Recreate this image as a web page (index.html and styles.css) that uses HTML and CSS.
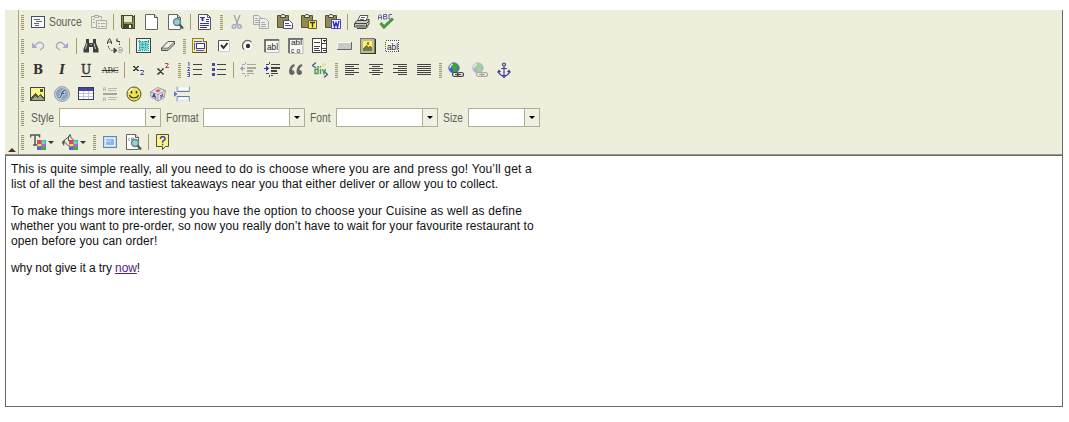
FILE: index.html
```html
<!DOCTYPE html>
<html lang="en">
<head>
<meta charset="utf-8">
<title>Rich text editor</title>
<link rel="stylesheet" href="styles.css">
</head>
<body>
<svg class="defs" width="0" height="0">
  <defs>
    <g id="page"><path d="M1.500.5h9l3 3v12h-12z" fill="#fff" stroke="#666"/><path d="M10.500.5v3h3" fill="#ddd" stroke="#555"/></g>
    <g id="clip"><path d="M.5 1.500h11v12H.5z" fill="#8f8b52" stroke="#55533a"/><path d="M3.500 3.500V2L5 .5h2L8.500 2v1.500z" fill="#e4e4da" stroke="#444"/></g>
    <g id="globe"><circle cx="6" cy="6" r="5.300" fill="#3558e8" stroke="#8393a8"/><path d="M4 2l4-.5 2.500 2.500-1.500 2 1 1-2 3-2.500 0-1-3-1-1z" fill="#3ca335"/><path d="M2 6l.5-2 2-2" fill="none" stroke="#e8f4ff" stroke-width="1.400"/></g>
    <g id="chain" fill="none" stroke-width="1.200"><rect x="4.500" y="10.500" width="6" height="4" rx="2" fill="#eeeedd"/><rect x="9.500" y="10.500" width="6" height="4" rx="2" fill="#eeeedd"/><path d="M7 12.500h6"/></g>
    <g id="swatch"><path d="M7 6h9v10H7z" fill="#777"/><path d="M7.500 6.500h4V10h-4z" fill="#ff3b3b"/><path d="M11.500 6.500h4V10h-4z" fill="#45e0e0"/><path d="M7.500 10h4v2.500h-4z" fill="#eee040"/><path d="M11.500 10h4v2.500h-4z" fill="#ee48ee"/><path d="M7.500 12.500h4v3h-4z" fill="#4562f5"/><path d="M11.500 12.500h4v3h-4z" fill="#38b838"/></g>
    <g id="lens"><circle cx="9" cy="8" r="3.500" fill="#8fd3d3" stroke="#668488" stroke-width="1.400"/><path d="M11.500 10.500L15 14.500" stroke="#555" stroke-width="2.200"/></g>
  </defs>
</svg>
<main class="editor">
  <header class="chrome">
    <div class="collapser"><svg viewBox="0 0 8 4" class="collapse-icon"><path d="M0 4L4 0l4 4z" fill="#4a3028"/></svg></div>
    <div class="toolbars">
      <div class="row">
        <div class="group"><i class="grip"></i>
          <a class="btn source"><svg viewBox="0 0 16 16" class="crisp"><path d="M1.500 2.500h13v11h-13z" fill="#f7f9f5" stroke="#405070"/><path d="M4 5.500h6M6 7.500h6M4 9.500h5M5 11.500h4" stroke="#667"/></svg><span class="caption source-text">Source</span></a>
          <a class="btn"><svg viewBox="0 0 16 16" fill="#eeede4" stroke="#aaaaa0"><path d="M.5 13.500v-11h3v-1h4v1h3v3M.5 13.500h5"/><path d="M3.500 1.500h4v2h-4zM5.500 6.500h10v8h-10z"/><path d="M7 9.500h2M10 9.500h4M7 12.500h2M10 12.500h4M2 5.500h2M2 8.500h2"/></svg></a>
          <i class="sep"></i>
          <a class="btn"><svg viewBox="0 0 16 16" class="crisp"><path d="M1 1h14v14H2l-1-1z" fill="#454532"/><path d="M4 2h8v6H4z" fill="#e9ebcc"/><path d="M2 2h1v12H2zM13 3h1v11h-1z" fill="#929249"/><path d="M4 8h9v2H4z" fill="#929249"/><path d="M9 11h2v3H9z" fill="#fff"/><path d="M13 1h1v1h-1z" fill="#fff"/></svg></a>
          <a class="btn"><svg viewBox="0 0 16 16"><use href="#page"/></svg></a>
          <a class="btn"><svg viewBox="0 0 16 16"><use href="#page" x="-1"/><use href="#lens"/></svg></a>
          <i class="sep"></i>
          <a class="btn"><svg viewBox="0 0 16 16"><path d="M1.500.5h9l3 3v12h-12z" fill="#fff" stroke="#556"/><path d="M10.500.5v3h3" fill="none" stroke="#556"/><path d="M3 3h5v1H6.500v3h-2V4H3zM9 5h3v1H9zM9 7h3v1H9zM3 9h9v1H3zM3 11h9v1H3zM3 13h7v1H3z" fill="#2a2af0"/></svg></a>
        </div>
        <div class="group"><i class="grip"></i>
          <a class="btn"><svg viewBox="0 0 16 16" fill="none" stroke="#a5a5aa" stroke-width="1.400"><path d="M5 1l4 10M11 1L7 11"/><g stroke="#a6a6c8"><circle cx="5" cy="12.500" r="1.800"/><circle cx="10.500" cy="12.500" r="1.800"/></g></svg></a>
          <a class="btn"><svg viewBox="0 0 16 16" fill="#eeede8" stroke="#a9a9b0"><path d="M.5 1.500h5l3 3v6h-8z"/><path d="M2 4.500h3M2 6.500h4M2 8.500h4"/><path d="M6.500 4.500h6l3 3v7h-9z"/><path d="M8 8.500h4M8 10.500h5M8 12.500h5"/></svg></a>
          <a class="btn"><svg viewBox="0 0 16 16"><use href="#clip"/><path d="M6.500 6.500h6l3 3v5h-9z" fill="#fff" stroke="#4747a0"/><path d="M8 9.500h4M8 11.500h6" stroke="#4747c0"/></svg></a>
          <a class="btn"><svg viewBox="0 0 16 16"><use href="#clip"/><path d="M7.500 6.500h8v8h-8z" fill="#ffef40" stroke="#666030"/><path d="M9 8.500h5M11.500 8.500v5" stroke="#333" stroke-width="1.400"/></svg></a>
          <a class="btn"><svg viewBox="0 0 16 16"><use href="#clip"/><path d="M6.500 5.500h9v9h-9z" fill="#f4f4ff" stroke="#4747a8"/><path d="M8 7l1.500 6L11 8.500l1.500 4.500L14 7" fill="none" stroke="#22c" stroke-width="1.300"/></svg></a>
          <i class="sep"></i>
          <a class="btn"><svg viewBox="0 0 16 16"><path d="M4 6l2-4.500h8L12 7" fill="#fff" stroke="#555"/><path d="M7 3.500h4M6 5.500h4" stroke="#666"/><path d="M.5 9.500L3 6.500h9.500l2.500-1.500v5L12.500 13H.5z" fill="#c9c9be" stroke="#444"/><path d="M1 9.500h11.500L15 7M12.500 9.500V13M3 14.500h9l2-2" fill="none" stroke="#444"/><path d="M2 11.500h9" stroke="#777"/></svg></a>
          <a class="btn"><svg viewBox="0 0 16 16"><g fill="none" stroke="#6265a8"><path d="M.5 5.500V2L2 .5 3.500 2v3.500M1 3.500h2.500M5.500.5v4.500h3l.5-1-.5-1.500H6M5.500.5h3v2M14 .5h-3v4.500h3"/></g><path d="M2.500 9l3.500 4L15 4.500" fill="none" stroke="#459845" stroke-width="3"/></svg></a>
        </div>
      </div>
      <div class="row">
        <div class="group"><i class="grip"></i>
          <a class="btn"><svg viewBox="0 0 16 16"><path d="M4 8l4.500-3.500H11l2.500 2v3L10 12" fill="none" stroke="#a8a8c8" stroke-width="1.300"/><path d="M2 4.500V10h5.500z" fill="#a8a8cc"/></svg></a>
          <a class="btn"><svg viewBox="0 0 16 16"><path d="M12 8L7.500 4.500H5L2.500 6.500v3L6 12" fill="none" stroke="#a8a8c8" stroke-width="1.300"/><path d="M14 4.500V10H8.500z" fill="#a8a8cc"/></svg></a>
          <i class="sep"></i>
          <a class="btn"><svg viewBox="0 0 16 16"><path d="M3 1h3v4h4V1h3v4l2.500 6v3.500H10V9H6v5.500H.5V11L3 5z" fill="#3d4040"/><path d="M4 5.500L2.500 11M11 5.500L12.500 11" stroke="#c8cac5"/><path d="M7.500 6.500h1" stroke="#fff"/></svg></a>
          <a class="btn"><svg viewBox="0 0 16 16" fill="none" stroke="#444"><path d="M.5 6V4L2.500.5 4.500 4v2M1 4h3.500"/><path d="M1.500 8v2l3 2.500h4M12.500 7V4L9 2" stroke-dasharray="1.500 1.200"/><path d="M7 10l3 2.500L7 15z" fill="#444"/><path d="M10 .5v3h3"/><path d="M12 9v6M12 9.500h2.500l1 1-.5 1.500h-3 3l.5 1-1 1.500H12" stroke="#aaa"/></svg></a>
          <i class="sep"></i>
          <a class="btn"><svg viewBox="0 0 16 16" class="crisp"><path d="M.5.5h14v14H.5z" fill="#e9f3ee" stroke="#3d4545"/><path d="M3 3h9v9H3z" fill="#70d8d8"/><path d="M3.500 2v11M6.500 3v9M9.500 3v9M12.500 2v11M2 3.500h11M3 6.500h9M3 9.500h9M2 12.500h11" stroke="#3a9999" stroke-dasharray="1 1"/></svg></a>
          <a class="btn"><svg viewBox="0 0 16 16"><path d="M1.500 10L8 3.500h6.500v2.500L8 12.500H1.500z" fill="#b9b9b5" stroke="#555"/><path d="M2 10h6l6-6.500" fill="none" stroke="#666"/><path d="M3 9.500h5L13.500 4H8.500z" fill="#f0f0ed"/></svg></a>
        </div>
        <div class="group"><i class="grip"></i>
          <a class="btn"><svg viewBox="0 0 16 16" class="crisp"><path d="M.5.500h11l3 3v11H.5z" fill="#fbef80" stroke="#8a8340"/><path d="M11.500.5v3h3" fill="#fff" stroke="#777039"/><path d="M14.500 4v10.500H1" fill="none" stroke="#55502a"/><path d="M4.500 5.500h8v5h-8z" fill="#fff" stroke="#3333ee"/><path d="M2 3.500h8M2.500 5v7M4 12.500h8" stroke="#5555e8"/></svg></a>
          <a class="btn"><svg viewBox="0 0 16 16"><path d="M2.500 2.500h11v11h-11z" fill="#fff" stroke="#ccc"/><path d="M2.500 13V2.500H13" fill="none" stroke="#555"/><path d="M5 7l2.500 3L11.500 5" fill="none" stroke="#333" stroke-width="2"/></svg></a>
          <a class="btn"><svg viewBox="0 0 16 16"><circle cx="8" cy="8" r="5" fill="#fff" stroke="#ddd"/><path d="M4 11.500A5 5 0 0 1 11.500 4" fill="none" stroke="#666" stroke-width="1.200"/><circle cx="8" cy="8" r="2.200" fill="#333"/></svg></a>
          <a class="btn"><svg viewBox="0 0 16 16"><path d="M1 1.500h14v13H1z" fill="#f8f8f2" stroke="#bbb"/><path d="M1 14V2h14" fill="none" stroke="#555" stroke-width="1.500"/><text x="3" y="12" textLength="11" lengthAdjust="spacingAndGlyphs" class="glyph">abl</text></svg></a>
          <a class="btn"><svg viewBox="0 0 16 16"><path d="M1 .5h14v15H1z" fill="#f8f8f2" stroke="#bbb"/><path d="M1 15V1h14" fill="none" stroke="#555" stroke-width="1.500"/><text x="3" y="7.300" textLength="11" lengthAdjust="spacingAndGlyphs" class="glyph tiny">abl</text><text x="3" y="14.800" textLength="9" lengthAdjust="spacing" class="glyph tiny">co</text></svg></a>
          <a class="btn"><svg viewBox="0 0 16 16" class="crisp"><path d="M.5.500h14v14H.5z" fill="#fff" stroke="#444"/><path d="M9.500 1v14M10 5.500h5M10 10.500h5M2 4.500h6M2 8.500h6M2 10.500h5M2 12.500h6" stroke="#444"/><path d="M11 2.500h3M12 3.500h1M11 12.500h3" stroke="#333"/></svg></a>
          <a class="btn"><svg viewBox="0 0 16 16"><path d="M1 4h14v7H1z" fill="#c9c9c6"/><path d="M1.500 11V4.500H15" fill="none" stroke="#fafaf6"/><path d="M1 11.500h14.500V4" fill="none" stroke="#666"/></svg></a>
          <a class="btn"><svg viewBox="0 0 16 16" class="crisp"><path d="M.5.500h14v15H.5z" fill="#bdb99b" stroke="#77756a"/><path d="M15.500 1v14.500H1" fill="none" stroke="#33332a"/><path d="M3 3h9v10H3z" fill="#ffef5a"/><path d="M3 10l3-3 2 2 2-1 2 2v3H3z" fill="#77754a"/><path d="M7 4h2v3H7z" fill="#88834c"/></svg></a>
          <a class="btn"><svg viewBox="0 0 16 16" class="crisp"><path d="M1.500 2.500h13v11h-13z" fill="#f8f8f4" stroke="#555" stroke-dasharray="1 1"/><text x="3" y="12" textLength="11" lengthAdjust="spacingAndGlyphs" class="glyph">abl</text></svg></a>
        </div>
      </div>
      <div class="row">
        <div class="group"><i class="grip"></i>
          <a class="btn letter bold">B</a><a class="btn letter italic">I</a><a class="btn letter underline">U</a><a class="btn letter strike">ABC</a>
          <i class="sep"></i>
          <a class="btn"><svg viewBox="0 0 16 16"><path d="M3 4.500l4 4M7 4.500l-4 4M2 4.500h2M6 4.500h2M2 8.500h2M6 8.500h2" stroke="#333" stroke-width="1.100"/><path d="M9 8.500h3.500V10L9.500 12.500H13" fill="none" stroke="#5557b0"/></svg></a>
          <a class="btn"><svg viewBox="0 0 16 16"><path d="M3 7l5 5M8 7L3 12M2 7h2.500M7 7h2M2 12h2.500M7 12h2" stroke="#333" stroke-width="1.100"/><path d="M10 1.500h3V3l-2.500 2.500H14" fill="none" stroke="#ad4949"/></svg></a>
        </div>
        <div class="group"><i class="grip"></i>
          <a class="btn"><svg viewBox="0 0 16 16"><path d="M6 2.500h9M6 7.500h9M6 12.500h9" stroke="#444" class="crisp"/><path d="M1 .500h1V4M.5 5.500h2v1l-2 2h2.500M.5 10.500h2v4h-2m0-2h2" fill="none" stroke="#5050a5"/></svg></a>
          <a class="btn"><svg viewBox="0 0 16 16" class="crisp"><path d="M6 2.500h9M6 7.500h9M6 12.500h9" stroke="#444"/><path d="M1 1h3v3H1zM1 6h3v3H1zM1 11h3v3H1z" fill="#4848a0"/></svg></a>
          <i class="sep"></i>
          <a class="btn"><svg viewBox="0 0 16 16" class="crisp" stroke="#aaa99c"><path d="M2 2.500h3M7 2.500h9M7 5h9M7 8h6M2 11.500h3M7 11.500h7M5.500 0v2M5.500 13v2M7 13.500h2"/><path d="M7 5.500h9M7 8.500h6" stroke-width="2"/><path d="M0 6.500h5M2.500 4v5M1.500 5v3" stroke="#9b9bcc"/></svg></a>
          <a class="btn"><svg viewBox="0 0 16 16" class="crisp" stroke="#444"><path d="M2 2.500h3M7 2.500h9M2 11.500h3M7 11.500h7M5.500 0v2M5.500 13v2M7 13.500h2"/><path d="M7 5.500h9M7 8.500h6" stroke-width="2"/><path d="M0 6.500h5M2.500 4v5M3.500 5v3" stroke="#3535a8"/></svg></a>
          <a class="btn"><svg viewBox="0 0 16 16" fill="#666"><path d="M6 2C3 3 1 6 1 9.500 1 12 2.500 13 4 13s2.500-1 2.500-2.500S5.500 8 4 8c0-2 1-3 3-4zM13.500 2c-3 1-5 4-5 7.500C8.500 12 10 13 11.500 13S14 12 14 10.500 13 8 11.500 8c0-2 1-3 3-4z"/></svg></a>
          <a class="btn"><svg viewBox="0 0 16 16"><path d="M4 .5L.5 3.500 4 6M12 9l3.500 3.500L12 15.500" fill="none" stroke="#4d6280" stroke-width="1.300"/><path d="M6 4v7.500H3V7.500h3M8.500 7v5M8.500 4v1.500M10.500 7l1.500 4.500L13.500 7" fill="none" stroke="#4a9a5a" stroke-width="1.400"/><path d="M12 0l1 1.500 2 1-2 1-1 1.500-1-1.500-2-1 2-1z" fill="#f1de84"/></svg></a>
        </div>
        <div class="group"><i class="grip"></i>
          <a class="btn"><svg viewBox="0 0 16 16" class="crisp lines"><path d="M1 2.500h14M1 4.500h9M1 6.500h14M1 8.500h9M1 10.500h14M1 12.500h9"/></svg></a>
          <a class="btn"><svg viewBox="0 0 16 16" class="crisp lines"><path d="M1 2.500h14M4 4.500h8M1 6.500h14M4 8.500h8M1 10.500h14M4 12.500h8"/></svg></a>
          <a class="btn"><svg viewBox="0 0 16 16" class="crisp lines"><path d="M1 2.500h14M6 4.500h9M1 6.500h14M6 8.500h9M1 10.500h14M6 12.500h9"/></svg></a>
          <a class="btn"><svg viewBox="0 0 16 16" class="crisp lines"><path d="M1 2.500h14M1 4.500h14M1 6.500h14M1 8.500h14M1 10.500h14M1 12.500h14"/></svg></a>
        </div>
        <div class="group"><i class="grip"></i>
          <a class="btn"><svg viewBox="0 0 16 16"><use href="#globe"/><use href="#chain" stroke="#444"/></svg></a>
          <a class="btn"><svg viewBox="0 0 16 16" class="faded"><use href="#globe"/><use href="#chain" stroke="#444"/></svg></a>
          <a class="btn"><svg viewBox="0 0 16 16" fill="none" stroke="#40408f" stroke-width="1.200"><circle cx="8" cy="2.500" r="1.500"/><path d="M8 4v10M5 6.500h6M3 9.500v2L5.500 13.500h5L13 11.500v-2M1.500 10.500l1.500-2 1.500 1.500M14.500 10.500l-1.500-2-1.500 1.500M6.500 14L8 15.500 9.500 14"/></svg></a>
        </div>
      </div>
      <div class="row">
        <div class="group"><i class="grip"></i>
          <a class="btn"><svg viewBox="0 0 16 16" class="crisp"><path d="M.5 1.500h14v13H.5z" fill="#fbf58a" stroke="#444"/><path d="M1 12l4-5 3 3 2-2 4 4v2H1z" fill="#54523a"/><path d="M10 3h3v3h-3z" fill="#55523a"/><path d="M2 14l3-4 2 2 3-2 4 4z" fill="#a9a683"/></svg></a>
          <a class="btn"><svg viewBox="0 0 16 16"><circle cx="8" cy="8" r="6.800" fill="#8aa5c2" stroke="#c5ccd2" stroke-width="1.500"/><circle cx="8" cy="8" r="7.500" fill="none" stroke="#8993a0" stroke-width=".8"/><path d="M11.500 4C8 4.500 8 7 7 10c-.5 1.500-1 2-2.500 2M7 7.500h4" fill="none" stroke="#f2f6fa" stroke-width="2.600"/><path d="M11.500 4C8 4.500 8 7 7 10c-.5 1.500-1 2-2.500 2M7 7.500h3.500" fill="none" stroke="#445f7c" stroke-width="1.300"/></svg></a>
          <a class="btn"><svg viewBox="0 0 16 16" class="crisp"><path d="M.5 1.500h15v12H.5z" fill="#fff" stroke="#333d62"/><path d="M1 2h14v3H1z" fill="#4448a5"/><path d="M1 7.500h14M1 10.500h14M5.500 5v8M10.500 5v8" stroke="#c5c5d8"/></svg></a>
          <a class="btn"><svg viewBox="0 0 16 16" stroke="#bbbaae" fill="none"><path d="M1.500 5V2l1-1 1 1v3M1.500 3.500h2M6 2.500h9M6 4.500h8M1.500 15v-3l1-1 1 1v3M1.500 13.500h2M6 11.500h9M6 13.500h8"/><path d="M1 8h14" stroke="#a5a498" stroke-width="2"/></svg></a>
          <a class="btn"><svg viewBox="0 0 16 16"><circle cx="8" cy="8" r="7" fill="#ece455" stroke="#55522b"/><path d="M3 6a5 5 0 0 1 4-3.500" fill="none" stroke="#fcfac0" stroke-width="1.500"/><path d="M5.500 5v2.500M10.500 5v2.500" stroke="#333" stroke-width="1.500"/><path d="M3.500 9c1 3.700 8 3.700 9 0" fill="none" stroke="#443f20" stroke-width="1.100"/></svg></a>
          <a class="btn"><svg viewBox="0 0 16 16"><path d="M.5 6l7-4.500 8 3L14 12l-6 3-7-4z" fill="#e8e8ef" stroke="#999"/><path d="M8 8.500V15M.5 6L8 8.500l7.500-4" fill="none" stroke="#999"/><path d="M5 5l3-2 3 1.500L8 6.500z" fill="#dd5959"/><path d="M2.500 11l1.500-3 2 4.500M3 10.500h2" fill="none" stroke="#4545bc" stroke-width="1.300"/><path d="M10 9.500l3.500 1M13 7.500l-2.500 5" stroke="#7c4cac" stroke-width="1.300"/></svg></a>
          <a class="btn"><svg viewBox="0 0 16 16"><path d="M3 .5v5h12.500v-5M3 15.500v-5h12.500v5" fill="#dce9f4" stroke="#8ba5bd"/><path d="M5 2.500h9M5 12.500h9" stroke="#fff" stroke-width="2"/><path d="M3 5.500h12.500M3 10.500h12.500" stroke="#5f7d99"/><path d="M0 5l3.500 3L0 11z" fill="#5b7fc0"/></svg></a>
        </div>
      </div>
      <div class="row">
        <div class="group"><i class="grip"></i>
          <label class="field"><span class="caption style-text">Style</span><span class="combo"><i class="drop"></i></span></label>
          <label class="field"><span class="caption format-text">Format</span><span class="combo"><i class="drop"></i></span></label>
          <label class="field"><span class="caption font-text">Font</span><span class="combo"><i class="drop"></i></span></label>
          <label class="field"><span class="caption size-text">Size</span><span class="combo small"><i class="drop"></i></span></label>
        </div>
      </div>
      <div class="row">
        <div class="group"><i class="grip"></i>
          <a class="btn menu"><svg viewBox="0 0 16 16"><path d="M.5 3.500V1h9v2.500M5 1v10M3 11h4" fill="none" stroke="#555" stroke-width="1.500"/><use href="#swatch"/></svg><i class="caret"></i></a>
          <a class="btn menu"><svg viewBox="0 0 16 16"><path d="M1.500 7l6-5 5 5-6 5z" fill="#e9e9e2" stroke="#555"/><path d="M6.500 7V2.500l1.500-2 1 2" fill="none" stroke="#555"/><path d="M0 9c0-2 2-3 3-3l-1 6z" fill="#555"/><use href="#swatch"/></svg><i class="caret"></i></a>
        </div>
        <div class="group"><i class="grip"></i>
          <a class="btn"><svg viewBox="0 0 16 16" class="crisp"><path d="M1.500 2.500h13v11h-13z" fill="#c5d8f0" stroke="#6688b5"/><path d="M3.500 4.500h9v7h-9z" fill="#8fb5ea" stroke="#e5efff"/><path d="M4 6h5v2H4z" fill="#b0cdf3"/></svg></a>
          <a class="btn"><svg viewBox="0 0 16 16"><use href="#page" x="-1"/><path d="M4 4L2 5.500 4 7M5.500 7V4h2v1.500h-2" fill="none" stroke="#888" stroke-width=".8"/><use href="#lens" y="1"/></svg></a>
          <i class="sep"></i>
          <a class="btn"><svg viewBox="0 0 16 16"><path d="M1.500.5h12v12h-3l-3 3v-3h-6z" fill="#fbf589" stroke="#55523c"/><path d="M5.500 5V4l1-1.300h2.500l1 1.300v1.500L7.700 7.200v1.500M7.700 9.800v1.500" fill="none" stroke="#4848a0" stroke-width="1.500"/></svg></a>
        </div>
      </div>
    </div>
  </header>
  <article class="content">
    <p><span class="l1">This is quite simple really, all you need to do is choose where you are and press go! You’ll get a</span><br><span class="l2">list of all the best and tastiest takeaways near you that either deliver or allow you to collect.</span></p>
    <p><span class="l3">To make things more interesting you have the option to choose your Cuisine as well as define</span><br><span class="l4">whether you want to pre-order, so now you really don’t have to wait for your favourite restaurant to</span><br><span class="l5">open before you can order!</span></p>
    <p><span class="l6">why not give it a try <a class="link" href="#">now</a>!</span></p>
  </article>
</main>
</body>
</html>
```
FILE: styles.css
```css
* { box-sizing: border-box; }
body {
  margin: 0;
  padding: 10px 6px 15px 5px;
  background: #fff;
  font-family: "Liberation Sans", Arial, sans-serif;
  font-size: 12px;
}
.defs { display: block; position: absolute; }
.editor { width: 1058px; height: 397px; display: flex; flex-direction: column; }
.chrome {
  display: flex;
  height: 145px;
  background: #eeeedd;
  border-right: 1px solid #696969;
  border-bottom: 1px solid #96968a;
}
.collapser {
  width: 14px;
  display: flex;
  align-items: flex-end;
  justify-content: center;
  padding-bottom: 2px;
  border-right: 1px solid #a4a491;
}
.collapse-icon { width: 8px; height: 4px; display: block; }
.toolbars { display: flex; flex-direction: column; }
.row { display: flex; gap: 1px; height: 24px; }
.group { display: flex; align-items: center; }
.grip {
  width: 3px;
  height: 15px;
  margin: 0 2px;
  background: repeating-linear-gradient(#a39d75 0 1px, #e4e1c8 1px 2px);
}
.sep { width: 1px; height: 16px; margin: 0 2px; background: #a19f72; }
.btn { display: flex; align-items: center; justify-content: center; width: 24px; height: 24px; color: #333; text-decoration: none; }
.btn svg { width: 16px; height: 16px; display: block; flex: none; }
.source { width: 61px; justify-content: flex-start; padding-left: 4px; gap: 3px; }
.menu { width: 32px; justify-content: flex-start; padding-left: 4px; gap: 2px; }
.caret { border: solid transparent; border-width: 3px 3px 0; border-top-color: #333; }
.crisp { shape-rendering: crispEdges; }
.lines { stroke: #444; }
.faded { opacity: .4; }
.glyph { font: 8.5px "Liberation Sans", sans-serif; fill: #222; }
.tiny { font-size: 6.5px; }
.letter { font: bold 12px "DejaVu Serif", serif; }
.italic { font-style: italic; }
.underline { font-weight: normal; text-decoration: underline; text-underline-offset: 2px; -webkit-text-stroke: .4px #333; }
.strike { font: 8.5px "Liberation Serif", serif; text-decoration: line-through; letter-spacing: -.3px; }
.caption { color: #5e5e57; transform: scaleX(.86); transform-origin: left; white-space: nowrap; line-height: 16px; }
.field { display: flex; align-items: center; padding-left: 5px; }
.style-text { width: 28px; }
.format-text { width: 37px; }
.font-text { width: 26px; }
.size-text { width: 25px; }
.combo { display: flex; justify-content: flex-end; width: 102px; height: 19px; margin-top: -1px; background: #fff; border: 1px solid #b0af96; }
.small { width: 72px; }
.drop { display: flex; align-items: center; justify-content: center; width: 15px; background: #f1f1e3; border-left: 1px solid #b0af96; }
.drop::after { content: ""; border: solid transparent; border-width: 3px 3px 0; border-top-color: #000; }
.content {
  flex: 1;
  padding: 6px 5px;
  border: 1px solid #696969;
  color: #111;
  line-height: 15px;
  white-space: nowrap;
}
.content p { margin: 0 0 12px; }
.link { color: #551a8b; }
.l1 { letter-spacing: .157px; }
.l2 { letter-spacing: .065px; }
.l3 { letter-spacing: .167px; }
.l4 { letter-spacing: .03px; }
.l5 { letter-spacing: .085px; }
.l6 { letter-spacing: -.09px; }
```
